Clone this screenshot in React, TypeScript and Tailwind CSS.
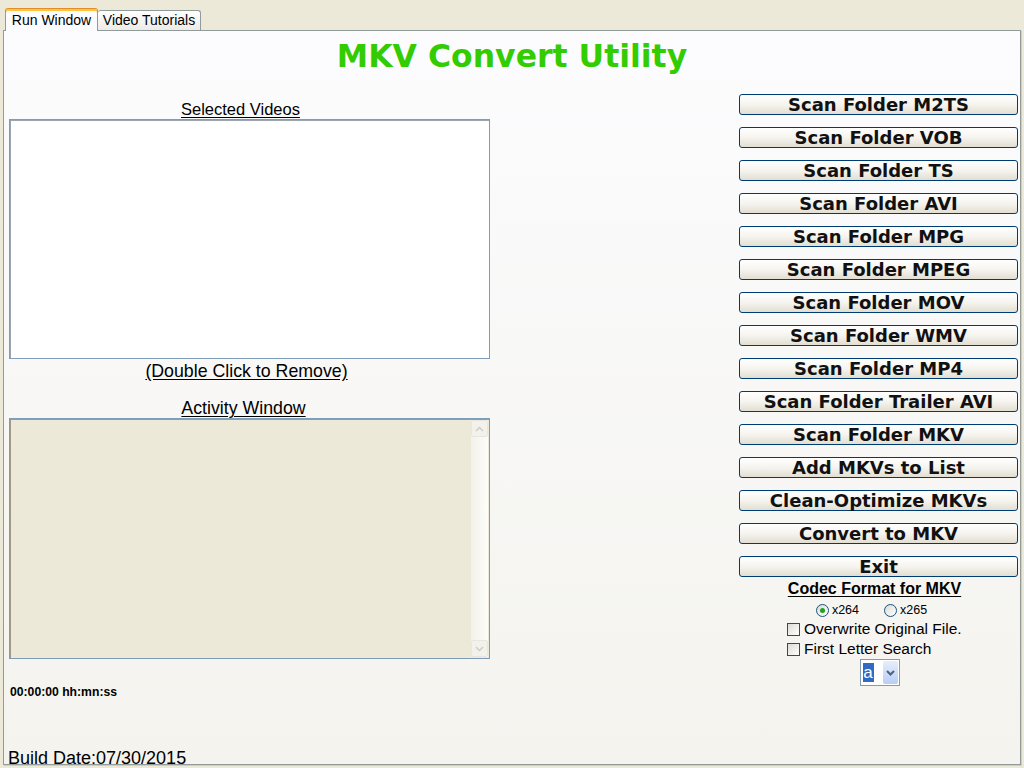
import React from "react";

const buttons = [
  "Scan Folder M2TS",
  "Scan Folder VOB",
  "Scan Folder TS",
  "Scan Folder AVI",
  "Scan Folder MPG",
  "Scan Folder MPEG",
  "Scan Folder MOV",
  "Scan Folder WMV",
  "Scan Folder MP4",
  "Scan Folder Trailer AVI",
  "Scan Folder MKV",
  "Add MKVs to List",
  "Clean-Optimize MKVs",
  "Convert to MKV",
  "Exit",
];

const arial = { fontFamily: '"Liberation Sans", Arial, sans-serif' };
const verdana = { fontFamily: '"DejaVu Sans", Verdana, sans-serif' };

function XPButton({ label }: { label: string }) {
  return (
    <button
      className="h-[21px] w-full rounded-[3px] border border-[#003c74] bg-linear-to-b from-white via-[#f5f4ef] to-[#e2ded2] text-[18px] font-bold leading-[19px] text-[#111]"
      style={verdana}
    >
      {label}
    </button>
  );
}

function Radio({ checked, label }: { checked?: boolean; label: string }) {
  return (
    <label className="flex items-center gap-[3px] text-[12.5px] leading-[18px] text-black">
      <span className="flex h-[13px] w-[13px] items-center justify-center rounded-full border border-[#1c5180] bg-linear-to-br from-[#dcdcd5] to-white">
        {checked && <span className="h-[5px] w-[5px] rounded-full bg-[#21a121]" />}
      </span>
      {label}
    </label>
  );
}

function Check({ label }: { label: string }) {
  return (
    <label className="flex h-[20px] items-center gap-[4px] text-[15.5px] text-black">
      <span className="h-[13px] w-[13px] border border-[#1c5180] bg-linear-to-br from-[#dcdcd5] to-white" />
      {label}
    </label>
  );
}

export default function App() {
  return (
    <div className="h-[768px] w-[1024px] overflow-hidden bg-[#ece9d8] px-[3px] pt-[7px]" style={arial}>
      {/* Tabs */}
      <div className="flex h-[23px] items-end pl-[2px]">
        <div className="relative z-10 -mb-px flex h-[23px] w-[93px] items-center justify-center rounded-t-[3px] border border-b-0 border-[#919b9c] border-t-[#e68b2c] bg-[#fcfcfe] text-[14px] text-black shadow-[inset_0_2px_0_#ffc73c]">
          Run Window
        </div>
        <div className="flex h-[20px] w-[103px] items-center justify-center rounded-t-[3px] border border-b-0 border-l-0 border-[#919b9c] bg-linear-to-b from-white to-[#ecebe6] text-[14px] text-black">
          Video Tutorials
        </div>
      </div>

      {/* Panel */}
      <div className="h-[735px] w-[1018px] border border-[#919b9c] bg-linear-to-b from-[#fcfcfe] to-[#f4f3ee] shadow-[1px_1px_0_#d0cec4]">
        <div className="pt-[9px] text-center text-[31.5px] font-bold leading-[32px] text-[#33cc00]" style={verdana}>
          MKV Convert Utility
        </div>

        <div className="mt-[22px] flex justify-between pl-[5px] pr-[2px]">
          {/* Left column */}
          <div className="flex w-[481px] flex-col pt-[5px]">
            <div className="pr-[18px] text-center text-[16.5px] leading-[20px] text-black underline underline-offset-2">
              Selected Videos
            </div>
            <div className="h-[240px] border border-[#7f9db9] bg-white shadow-[inset_1px_1px_0_#9aa6b2]" />
            <div className="mt-[2px] pr-[6px] text-center text-[17.75px] leading-[20px] text-black underline underline-offset-2">
              (Double Click to Remove)
            </div>
            <div className="mt-[18px] pr-[12px] text-center text-[17.75px] leading-[19px] text-black underline underline-offset-2">
              Activity Window
            </div>
            <div className="flex h-[241px] border border-[#7f9db9] bg-[#ece9d8] shadow-[inset_1px_1px_0_#a09a86]">
              <div className="flex-1" />
              <div className="my-[1px] mr-[1px] flex w-[17px] flex-col justify-between bg-linear-to-r from-[#f3f1ea] to-[#fdfdfb]">
                <div className="flex h-[17px] items-center justify-center rounded-[2px] border border-[#e8e6df] bg-[#f2f1ec]">
                  <svg width="9" height="6" viewBox="0 0 9 6">
                    <path d="M1 5 L4.5 1.5 L8 5" fill="none" stroke="#cfcdc4" strokeWidth="1.5" />
                  </svg>
                </div>
                <div className="flex h-[17px] items-center justify-center rounded-[2px] border border-[#e8e6df] bg-[#f2f1ec]">
                  <svg width="9" height="6" viewBox="0 0 9 6">
                    <path d="M1 1 L4.5 4.5 L8 1" fill="none" stroke="#cfcdc4" strokeWidth="1.5" />
                  </svg>
                </div>
              </div>
            </div>
            <div className="mt-[26px] pl-[1px] text-[12.2px] font-bold leading-[14px] text-black">
              00:00:00 hh:mn:ss
            </div>
            <div className="mt-[49px] -ml-[1px] text-[18px] leading-[20px] text-black">Build Date:07/30/2015</div>
          </div>

          {/* Right column */}
          <div className="flex w-[279px] flex-col">
            <div className="flex flex-col gap-[12px]">
              {buttons.map((b) => (
                <XPButton key={b} label={b} />
              ))}
            </div>
            <div className="mt-[2px] pr-[8px] text-center text-[16px] font-bold leading-[20px] text-black underline underline-offset-2">
              Codec Format for MKV
            </div>
            <div className="mt-[2px] flex justify-center gap-[25px] pr-[14px]">
              <Radio checked label="x264" />
              <Radio label="x265" />
            </div>
            <div className="flex flex-col pl-[48px]">
              <Check label="Overwrite Original File." />
              <Check label="First Letter Search" />
            </div>
            <div className="flex justify-center pl-[2px]">
              <div className="flex h-[27px] w-[40px] items-center border border-[#7f9db9] bg-white pl-[2px] pr-[1px]">
                <span className="flex h-[19px] w-[11px] items-center justify-center bg-[#316ac5] text-[17px] leading-none text-white">
                  a
                </span>
                <div className="flex-1" />
                <div className="flex h-[23px] w-[15px] items-center justify-center rounded-[2px] bg-linear-to-b from-[#e6eefc] to-[#b9cdf5]">
                  <svg width="9" height="6" viewBox="0 0 9 6">
                    <path d="M1 1 L4.5 4.5 L8 1" fill="none" stroke="#4d6185" strokeWidth="2" />
                  </svg>
                </div>
              </div>
            </div>
          </div>
        </div>
      </div>
    </div>
  );
}
